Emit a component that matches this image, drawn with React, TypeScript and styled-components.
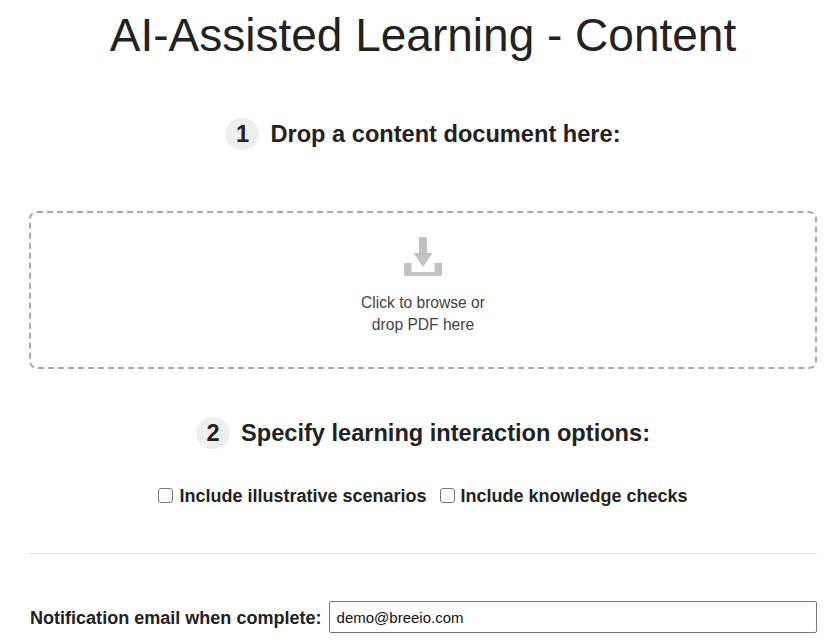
import React from 'react'
import styled, { createGlobalStyle } from 'styled-components'

const GlobalStyle = createGlobalStyle`
  html, body {
    margin: 0;
    padding: 0;
    background: #fff;
    overflow: hidden;
  }
  body {
    font-family: "Liberation Sans", Arial, sans-serif;
    color: #222;
  }
`

const Page = styled.main`
  width: 788px;
  margin-left: 29px;
  display: flex;
  flex-direction: column;
`

const Title = styled.h1`
  margin: 10px 0 0;
  height: 50px;
  font-size: 46px;
  line-height: 50px;
  font-weight: 400;
  text-align: center;
  white-space: nowrap;
`

const StepHeading = styled.h2<{ $top: number }>`
  margin: ${p => p.$top}px 0 0;
  height: 32px;
  display: flex;
  align-items: center;
  justify-content: center;
  gap: 11px;
  font-size: 23.6px;
  font-weight: 700;
  line-height: 34px;
`

const StepNumber = styled.span`
  width: 34px;
  height: 32px;
  border-radius: 50%;
  background: #eee;
  display: flex;
  align-items: center;
  justify-content: center;
`

const DropZone = styled.div`
  margin-top: 61px;
  height: 158px;
  box-sizing: border-box;
  border: 2px dashed #aaa;
  border-radius: 8px;
  display: flex;
  flex-direction: column;
  align-items: center;
  padding-top: 24px;
`

const DropText = styled.p`
  margin: 15px 0 0;
  font-size: 15.6px;
  line-height: 22px;
  font-weight: 400;
  color: #444;
  text-align: center;
`

const Options = styled.div`
  margin-top: 35px;
  display: flex;
  justify-content: center;
  gap: 13px;
`

const OptionLabel = styled.label`
  display: flex;
  align-items: center;
  gap: 6px;
  font-size: 18px;
  font-weight: 700;
  line-height: 24px;
`

const CheckBox = styled.input`
  appearance: none;
  width: 15px;
  height: 15px;
  margin: 0 0 2px;
  box-sizing: border-box;
  border: 1.5px solid #767676;
  border-radius: 3px;
  background: #fff;
`

const Divider = styled.hr`
  margin: 45px 0 0;
  border: 0;
  border-top: 1px solid #ddd;
`

const EmailRow = styled.div`
  margin-top: 47px;
  display: flex;
  align-items: center;
  gap: 7px;
`

const EmailLabel = styled.label`
  margin: 2px 0 0 1px;
  font-size: 18.05px;
  font-weight: 700;
  white-space: nowrap;
`

const EmailInput = styled.input`
  flex: 1;
  min-width: 0;
  height: 32px;
  box-sizing: border-box;
  padding: 0 7px;
  border: 1px solid #767676;
  border-radius: 2px;
  font-family: inherit;
  font-size: 15px;
  color: #111;
`

function DownloadIcon() {
  return (
    <svg width="38" height="40" viewBox="0 0 38 40" fill="#c2c2c2" aria-hidden="true">
      <path d="M15 1a1 1 0 0 1 1-1h6a1 1 0 0 1 1 1v15h5.5L19 30 9.500 16H15z" />
      <path d="M0 26h7.500v9h23v-9H38v11a2 2 0 0 1-2 2H2a2 2 0 0 1-2-2z" />
    </svg>
  )
}

export default function App() {
  return (
    <Page>
      <GlobalStyle />
      <Title>AI-Assisted Learning - Content</Title>
      <StepHeading $top={58}>
        <StepNumber>1</StepNumber>
        Drop a content document here:
      </StepHeading>
      <DropZone>
        <DownloadIcon />
        <DropText>
          Click to browse or
          <br />
          drop PDF here
        </DropText>
      </DropZone>
      <StepHeading $top={48}>
        <StepNumber>2</StepNumber>
        Specify learning interaction options:
      </StepHeading>
      <Options>
        <OptionLabel>
          <CheckBox type="checkbox" />
          Include illustrative scenarios
        </OptionLabel>
        <OptionLabel>
          <CheckBox type="checkbox" />
          Include knowledge checks
        </OptionLabel>
      </Options>
      <Divider />
      <EmailRow>
        <EmailLabel>Notification email when complete:</EmailLabel>
        <EmailInput type="text" defaultValue="demo@breeio.com" />
      </EmailRow>
    </Page>
  )
}
